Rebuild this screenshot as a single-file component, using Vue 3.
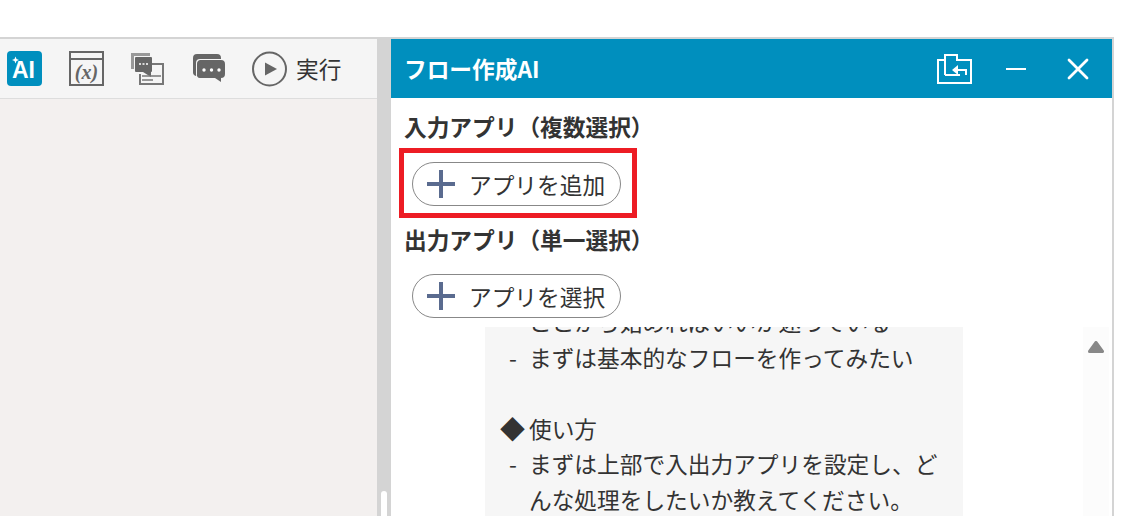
<template>
  <div class="page">
    <div class="top-space"></div>
    <div class="workspace">
      <section class="editor">
        <div class="toolbar">
          <svg class="tool ai" width="36" height="36" viewBox="0 0 36 36">
            <rect width="35" height="35" rx="4" fill="#008fbe" />
            <path d="M8.500 5.500l1 2.500 2.500 1-2.500 1-1 2.500-1-2.500-2.500-1 2.500-1z" fill="#fff" />
            <text x="5" y="27" class="ai-text">AI</text>
          </svg>
          <svg class="tool" width="36" height="36" viewBox="0 0 36 36" fill="none" stroke="#666" stroke-width="2">
            <rect x="1" y="1" width="33" height="33" />
            <path d="M1 8h33" />
            <text x="17.500" y="28" class="var-text" stroke="none">(x)</text>
          </svg>
          <svg class="tool" width="36" height="36" viewBox="0 0 36 36" fill="none">
            <path d="M0 2h19v3H3v13H0z" fill="#999" />
            <rect x="4" y="6" width="17" height="15" rx="1" fill="#666" />
            <path d="M12 21h8v5z" fill="#666" />
            <path d="M8 13h2M11.500 13h2M15 13h2" stroke="#fff" stroke-width="1.500" />
            <path d="M21 13h11v20H9V23" stroke="#777" stroke-width="2" />
            <path d="M11 25h19M11 29h11" stroke="#777" stroke-width="1.500" />
          </svg>
          <svg class="tool" width="36" height="36" viewBox="0 0 36 36">
            <path d="M4 3h20a4 4 0 0 1 4 4v1H7a4 4 0 0 0-4 4v13a4 4 0 0 1-3-4V7a4 4 0 0 1 4-4z" fill="#666" />
            <path d="M7 9h21a4 4 0 0 1 4 4v10a4 4 0 0 1-4 4v4l-6-4H7a3 3 0 0 1-3-4V13a4 4 0 0 1 3-4z" fill="#666" />
            <circle cx="11" cy="19" r="1.700" fill="#fff" />
            <circle cx="18.500" cy="19" r="1.700" fill="#fff" />
            <circle cx="26" cy="19" r="1.700" fill="#fff" />
          </svg>
          <button class="run">
            <svg width="36" height="36" viewBox="0 0 36 36" fill="none">
              <circle cx="17.500" cy="18" r="16.500" stroke="#666" stroke-width="2" />
              <path d="M13 11.500l12 6.500-12 6.500z" fill="#666" />
            </svg>
            <span>実行</span>
          </button>
        </div>
        <div class="canvas"></div>
      </section>

      <div class="splitter"><div class="handle"></div></div>

      <section class="panel">
        <header class="panel-head">
          <h1>フロー作成AI</h1>
          <div class="head-actions">
            <svg class="export" width="36" height="30" viewBox="0 0 36 30" fill="none" stroke="#fff" stroke-width="2">
              <path d="M8 6H1v23h33V6H20" />
              <path d="M8 21V1h12v6" />
              <path d="M8 21h15" />
              <path d="M20 16h9v5" />
              <path d="M21 11l-6 5 6 5z" fill="#fff" stroke="none" />
            </svg>
            <svg class="minimize" width="20" height="4" viewBox="0 0 20 4"><rect width="20" height="2" y="1" fill="#fff" /></svg>
            <svg width="22" height="22" viewBox="0 0 22 22" stroke="#fff" stroke-width="2.800" stroke-linecap="round">
              <path d="M2 2l18 18M20 2L2 20" />
            </svg>
          </div>
        </header>

        <div class="fields">
          <h2>入力アプリ（複数選択）</h2>
          <div class="highlight">
            <button class="add-btn">
              <span class="plus"></span>
              <span>アプリを追加</span>
            </button>
          </div>
          <h2 class="second">出力アプリ（単一選択）</h2>
          <button class="add-btn single">
            <span class="plus"></span>
            <span>アプリを選択</span>
          </button>
        </div>

        <div class="chat">
          <div class="bubble">
            <div class="scrolled">
              <p v-for="(line, i) in lines" :key="i" :class="line.cls">
                <span v-if="line.mark" class="mark">{{ line.mark }}</span>{{ line.text }}
              </p>
            </div>
          </div>
          <div class="scrollbar">
            <svg width="16" height="12" viewBox="0 0 16 12"><path d="M8 1.500L14.500 10.500H1.500z" fill="#888" stroke="#888" stroke-width="3" stroke-linejoin="round" /></svg>
          </div>
        </div>
      </section>
    </div>
  </div>
</template>

<script setup>
const lines = [
  { mark: '-', text: 'ここから始めればいいか迷っている', cls: 'item' },
  { mark: '-', text: 'まずは基本的なフローを作ってみたい', cls: 'item' },
  { text: '\u00a0', cls: 'blank' },
  { mark: '◆', text: '使い方', cls: 'item head' },
  { mark: '-', text: 'まずは上部で入出力アプリを設定し、ど', cls: 'item' },
  { text: 'んな処理をしたいか教えてください。', cls: 'item cont' }
]
</script>

<style>
html, body {
  margin: 0;
  background: #fff;
  overflow: hidden;
}
</style>

<style scoped>
.page {
  width: 1128px;
  height: 516px;
  display: flex;
  flex-direction: column;
  overflow: hidden;
  font-family: "Noto Sans CJK JP", "Noto Sans", sans-serif;
  color: #333;
}

.top-space {
  height: 37px;
  flex: none;
}

.workspace {
  flex: 1;
  min-height: 0;
  display: flex;
  width: 1114px;
  border-top: 2px solid #d4d4d4;
}

.editor {
  width: 377px;
  flex: none;
  display: flex;
  flex-direction: column;
  background: #f3f0ef;
}

.toolbar {
  height: 60px;
  flex: none;
  box-sizing: border-box;
  display: flex;
  align-items: center;
  gap: 26px;
  padding-left: 7px;
  background: #f5f5f5;
  border-bottom: 1px solid #ddd;
}

.ai-text {
  font: 700 23px "Liberation Sans", sans-serif;
  fill: #fff;
}

.var-text {
  font: italic 700 20px "Liberation Serif", serif;
  fill: #666;
  text-anchor: middle;
}

.run {
  display: flex;
  align-items: center;
  gap: 8px;
  margin-left: -3px;
  padding: 0;
  border: 0;
  background: none;
  font: inherit;
  font-size: 22.700px;
  color: #333;
}

.splitter {
  width: 14px;
  flex: none;
  background: #d4d4d4;
  display: flex;
  align-items: flex-end;
  justify-content: center;
}

.handle {
  width: 6px;
  height: 25px;
  background: #fff;
  border-radius: 3px 3px 0 0;
}

.panel {
  flex: 1;
  min-width: 0;
  display: flex;
  flex-direction: column;
  background: #fff;
  border-right: 2px solid #d4d4d4;
}

.panel-head {
  height: 59px;
  flex: none;
  display: flex;
  align-items: center;
  justify-content: space-between;
  padding: 0 23px 0 13px;
  background: #008fbe;
  color: #fff;
}

.panel-head h1 {
  margin: 0;
  font-size: 22.700px;
  font-weight: 700;
}

.head-actions {
  display: flex;
  align-items: center;
  gap: 33px;
}

.minimize {
  margin-right: 8px;
}

.fields {
  flex: none;
  padding: 12px 0 9px 14px;
}

.fields h2 {
  margin: 0 0 0 -1px;
  font-size: 22.700px;
  line-height: 33px;
  font-weight: 700;
}

.fields .second {
  margin-top: 5px;
}

.highlight {
  width: 238px;
  height: 70px;
  box-sizing: border-box;
  margin: 5px 0 0 -6px;
  padding: 9px 0 0 8px;
  border: 5px solid #ed1c24;
}

.add-btn {
  width: 209px;
  height: 44px;
  box-sizing: border-box;
  display: flex;
  align-items: center;
  gap: 14px;
  padding: 0 0 0 14px;
  border: 1px solid #888;
  border-radius: 22px;
  background: #fff;
  font: inherit;
  font-size: 22.700px;
  color: #333;
}

.add-btn.single {
  margin: 18px 0 0 7px;
}

.plus {
  width: 28px;
  height: 28px;
  flex: none;
  background:
    linear-gradient(#5a6b8f, #5a6b8f) center / 28px 4px no-repeat,
    linear-gradient(#5a6b8f, #5a6b8f) center / 4px 28px no-repeat;
}

.chat {
  flex: 1;
  min-height: 0;
  display: flex;
  justify-content: space-between;
  padding: 0 3px 0 94px;
}

.bubble {
  width: 478px;
  background: #f6f6f6;
  overflow: hidden;
  padding: 0 16px;
  box-sizing: border-box;
}

.scrolled {
  margin-top: -23px;
}

.bubble p {
  margin: 0;
  font-size: 22.700px;
  line-height: 35.500px;
  white-space: nowrap;
}

.item {
  position: relative;
  padding-left: 28px;
}

.mark {
  position: absolute;
  left: 8px;
}

.head .mark {
  left: -1px;
  font-size: 25px;
}

.scrollbar {
  width: 26px;
  background: #fcfcfc;
  display: flex;
  justify-content: center;
  align-items: flex-start;
  padding-top: 14px;
  box-sizing: border-box;
}
</style>
